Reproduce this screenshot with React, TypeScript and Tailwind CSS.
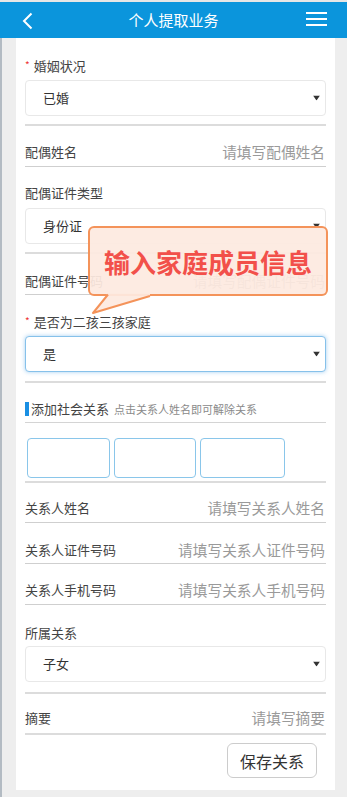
import React from "react";

const font = { fontFamily: '"Noto Sans CJK SC", "Noto Sans", sans-serif' };

function Caret() {
  return (
    <svg width="7" height="5" viewBox="0 0 7 5" className="absolute right-[5px] top-1/2 -translate-y-1/2">
      <path d="M0 0 L7 0 L3.5 5 Z" fill="#333" />
    </svg>
  );
}

function Select({ value, focused }: { value: string; focused?: boolean }) {
  return (
    <div
      className={
        "relative h-[36px] rounded-[4px] bg-white flex items-center pl-[17px] text-[13px] text-[#333] " +
        (focused
          ? "border border-[#86c1ea] shadow-[0_0_4px_rgba(102,175,233,0.6)]"
          : "border border-[#e8e8e8]")
      }
    >
      {value}
      <Caret />
    </div>
  );
}

function Label({ text, req }: { text: string; req?: boolean }) {
  return (
    <div className="h-5 flex items-center text-[13px] text-[#444] leading-5">
      {req && <span className="text-[#e33] text-[10px] mr-[4px] mt-[-3px]">*</span>}
      {text}
    </div>
  );
}

function InputRow({ label, ph, pt }: { label: string; ph: string; pt: string }) {
  return (
    <div className={pt}>
      <div className="h-5 flex items-center justify-between">
        <span className="text-[13px] text-[#444]">{label}</span>
        <span className="text-[14.7px] text-[#9a9a9a] pr-px">{ph}</span>
      </div>
    </div>
  );
}

export default function App() {
  return (
    <div className="relative w-[347px] min-h-[797px] bg-[#eeeeee]" style={font}>
      <div className="h-[2px] bg-[#e6e6e6]" />
      <div className="h-[36px] bg-[#0b95dc] relative flex items-center justify-center">
        <svg width="12" height="18" viewBox="0 0 12 18" className="absolute left-[22px] top-[10px]">
          <path d="M9.5 1.5 L2 9 L9.5 16.5" stroke="white" strokeWidth="2" fill="none" />
        </svg>
        <span className="text-white text-[15px]">个人提取业务</span>
        <svg width="21" height="16" viewBox="0 0 21 16" className="absolute left-[306px] top-[10px]">
          <rect x="0" y="0" width="21" height="2" fill="white" />
          <rect x="0" y="6" width="21" height="2" fill="white" />
          <rect x="0" y="12" width="21" height="2" fill="white" />
        </svg>
      </div>
      <div className="border-l-2 border-[#b3bbc3] pl-[14px] pr-[12px] pb-[8px]">
        <div className="bg-white px-[9px] pb-[12px]">
          {/* 婚姻状况 */}
          <div className="pt-[18px]">
            <Label text="婚姻状况" req />
            <div className="mt-[4px]">
              <Select value="已婚" />
            </div>
            <div className="mt-[8px] h-[2px] bg-[#dcdcdc]" />
          </div>
          <InputRow label="配偶姓名" ph="请填写配偶姓名" pt="pt-[16px]" />
          <div className="mt-[4px] h-px bg-[#cfcfcf]" />
          {/* 配偶证件类型 */}
          <div className="pt-[16px]">
            <Label text="配偶证件类型" />
            <div className="mt-[5px]">
              <Select value="身份证" />
            </div>
            <div className="mt-[8px] h-[2px] bg-[#dcdcdc]" />
          </div>
          <InputRow label="配偶证件号码" ph="请填写配偶证件号码" pt="pt-[17px]" />
          <div className="mt-[3px] h-px bg-[#cfcfcf]" />
          {/* 二孩三孩 */}
          <div className="pt-[17px]">
            <Label text="是否为二孩三孩家庭" req />
            <div className="mt-[4px]">
              <Select value="是" focused />
            </div>
            <div className="mt-[9px] h-[2px] bg-[#dcdcdc]" />
          </div>
          {/* 添加社会关系 */}
          <div className="pt-[16px]">
            <div className="h-5 flex items-center">
              <div className="w-[4px] h-[14px] bg-[#1a8fe3] mr-[2px]" />
              <span className="text-[13px] text-[#444]">添加社会关系</span>
              <span className="text-[11px] text-[#8a8a8a] ml-[5px]">点击关系人姓名即可解除关系</span>
            </div>
          </div>
          <div className="mt-[3px] h-px bg-[#d4d4d4]" />
          <div className="pt-[15px] pl-[2px] flex gap-[4px]">
            <div className="w-[83px] h-[40px] rounded-[4px] border border-[#8ac6ea]" />
            <div className="w-[82px] h-[40px] rounded-[4px] border border-[#8ac6ea]" />
            <div className="w-[85px] h-[40px] rounded-[4px] border border-[#8ac6ea]" />
          </div>
          <div className="mt-[3px] h-[2px] bg-[#dcdcdc]" />
          <InputRow label="关系人姓名" ph="请填写关系人姓名" pt="pt-[15px]" />
          <div className="mt-[4px] h-px bg-[#cfcfcf]" />
          <InputRow label="关系人证件号码" ph="请填写关系人证件号码" pt="pt-[17px]" />
          <div className="mt-[3px] h-px bg-[#cfcfcf]" />
          <InputRow label="关系人手机号码" ph="请填写关系人手机号码" pt="pt-[16px]" />
          <div className="mt-[4px] h-px bg-[#cfcfcf]" />
          {/* 所属关系 */}
          <div className="pt-[18px]">
            <Label text="所属关系" />
            <div className="mt-[3px]">
              <Select value="子女" />
            </div>
            <div className="mt-[10px] h-[2px] bg-[#dcdcdc]" />
          </div>
          <InputRow label="摘要" ph="请填写摘要" pt="pt-[14px]" />
          <div className="mt-[5px] h-[2px] bg-[#dcdcdc]" />
          <div className="mt-[8px] flex justify-end pr-[9px]">
            <button className="w-[90px] h-[35px] rounded-[6px] border border-[#cccccc] bg-white text-[16px] text-[#333]">
              保存关系
            </button>
          </div>
        </div>
      </div>

      {/* callout */}
      <div className="absolute left-[88px] top-[226px] w-[240px] h-[70px] rounded-[6px] border-2 border-[#f4935a] bg-[rgba(253,233,224,0.93)] flex items-center justify-center">
        <span className="text-[26px] font-bold text-[#f2504a] tracking-[0px]">输入家庭成员信息</span>
      </div>
      <svg width="70" height="22" viewBox="0 0 70 22" className="absolute left-[90px] top-[293px]">
        <path d="M18 0 L3 20 L60 3 L60 0 Z" fill="rgba(253,233,224,0.93)" />
        <path d="M18 1.5 L3 20 L60 3" stroke="#f4935a" strokeWidth="2" fill="none" strokeLinejoin="round" />
      </svg>
    </div>
  );
}
